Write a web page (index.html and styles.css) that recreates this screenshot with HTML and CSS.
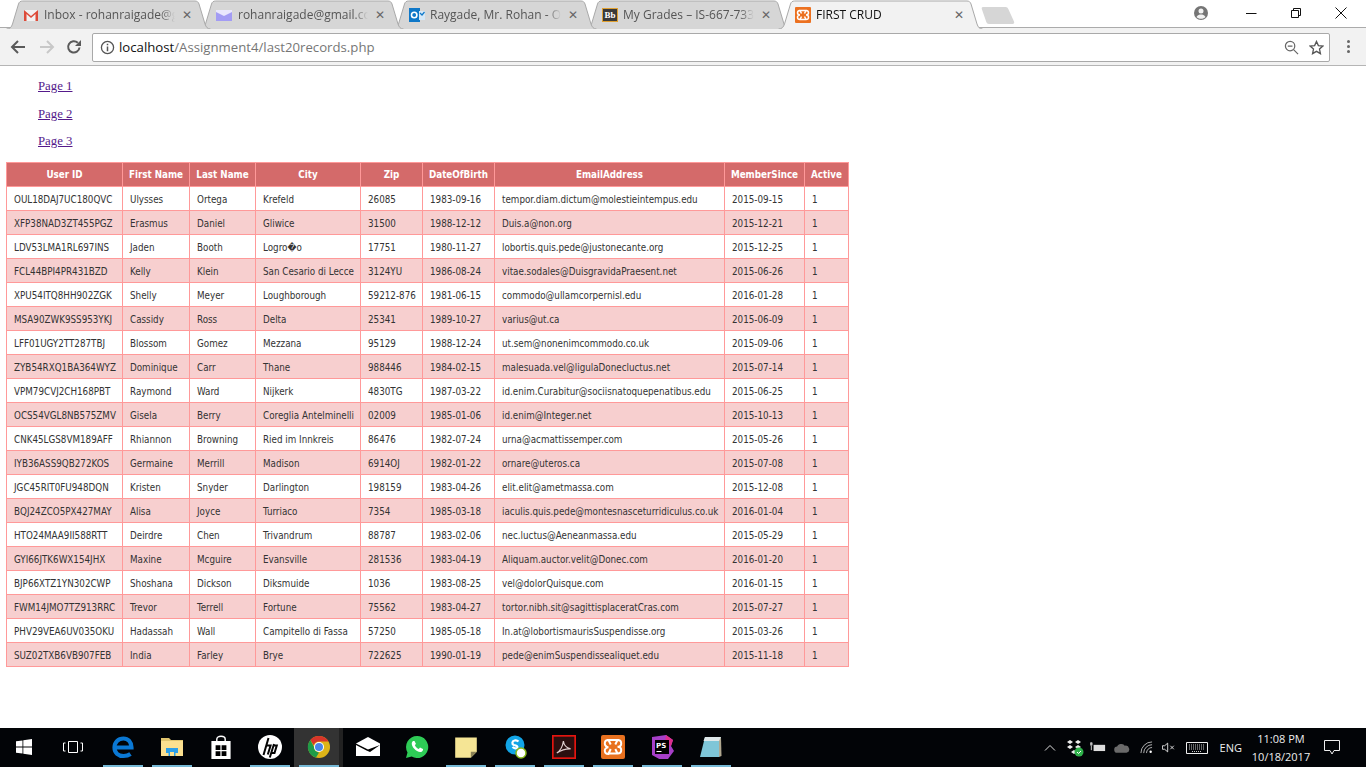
FILE: index.html
```html
<!DOCTYPE html>
<html lang="en">
<head>
<meta charset="utf-8">
<title>FIRST CRUD</title>
<link rel="stylesheet" href="styles.css">
</head>
<body>
<svg class="defs" width="0" height="0" aria-hidden="true">
  <symbol id="tabshape" viewBox="0 0 205 29" preserveAspectRatio="none">
    <path d="M0.5 29C4 29 5.500 27 6.500 24L12.500 4C13.100 2 14.500 1 16.500 1L189 1C191 1 192.400 2 193 4L199 24C200 27 201.500 29 204.500 29"/>
  </symbol>
</svg>
<div class="window">
  <header class="tabstrip">
    <div class="tab t1"><svg class="tabbg"><use href="#tabshape"/></svg>
      <svg class="fav" viewBox="0 0 16 16"><path d="M1 3h14v11H1z" fill="#f1f1f1"/><path d="M1 14V3l7 6 7-6v11h-2.500V7L8 11 3.500 7v7z" fill="#dd4b39"/></svg>
      <span class="tabtitle">Inbox - rohanraigade@gmail.com</span><span class="close">✕</span></div>
    <div class="tab t2"><svg class="tabbg"><use href="#tabshape"/></svg>
      <svg class="fav wide" viewBox="0 0 16 16"><path d="M0 3h16v11H0z" fill="#a39cf4"/><path d="M0 3h16v2L8 9 0 5z" fill="#e9e7fd"/></svg>
      <span class="tabtitle">rohanraigade@gmail.com</span><span class="close">✕</span></div>
    <div class="tab t3"><svg class="tabbg"><use href="#tabshape"/></svg>
      <svg class="fav" viewBox="0 0 16 16"><path d="M0 1h11v14H0z" fill="#0f78c8"/><path d="M10 4h6v9h-6z" fill="#d5e8f7"/><circle cx="5.200" cy="8" r="2.700" fill="none" stroke="#fff" stroke-width="1.600"/><path d="M11 6l2 2 2.500-3" fill="none" stroke="#0f78c8" stroke-width="1.200"/></svg>
      <span class="tabtitle">Raygade, Mr. Rohan - Outlook</span><span class="close">✕</span></div>
    <div class="tab t4"><svg class="tabbg"><use href="#tabshape"/></svg>
      <span class="bb">Bb</span>
      <span class="tabtitle">My Grades – IS-667-7330</span><span class="close">✕</span></div>
    <div class="tab t5 active"><svg class="tabbg"><use href="#tabshape"/></svg>
      <svg class="fav" viewBox="0 0 16 16"><rect width="16" height="16" rx="1" fill="#ec7120"/><path d="M5 3.500h6L9.500 6.500 11 3.500c2 0 2.500 1 2.500 2.300 0 1.200-1 2.200-2.500 2.200 1.500 0 2.500 1 2.500 2.200 0 1.300-.5 2.300-2.500 2.300L9.500 9.500 11 12.500H5l1.500-3L5 12.500c-2 0-2.500-1-2.500-2.300C2.500 9 3.500 8 5 8 3.500 8 2.500 7 2.500 5.800 2.500 4.500 3 3.500 5 3.500l1.500 3z" fill="none" stroke="#fff" stroke-width="1.500"/></svg>
      <span class="tabtitle">FIRST CRUD</span><span class="close">✕</span></div>
    <svg class="newtab" viewBox="0 0 34 17"><path d="M2 0H24.500C26 0 26.800.8 27.300 2L33 14.500C33.600 16 33 17 31.500 17H8C6.500 17 5.800 16 5.300 15L.8 2C.4.800 1 0 2 0z"/></svg>
    <div class="winctl">
      <svg class="avatar" viewBox="0 0 16 16"><circle cx="8" cy="8" r="7" fill="#757575"/><circle cx="8" cy="6" r="2.500" fill="#f2f2f2"/><path d="M3.500 12c1-2 3-2.500 4.500-2.500s3.500.5 4.500 2.500c-1 1-2.700 1.800-4.500 1.800S4.500 13 3.500 12z" fill="#f2f2f2"/></svg>
      <svg class="wc" viewBox="0 0 12 12"><path d="M1 6.500h10.500" stroke="#111" fill="none"/></svg>
      <svg class="wc" viewBox="0 0 12 12"><path d="M1.500 3.500h7v7h-7zM3.500 3.500v-2h7v7h-2" stroke="#111" fill="none"/></svg>
      <svg class="wc" viewBox="0 0 12 12"><path d="M.5.500l11 11M11.500.500l-11 11" stroke="#111" fill="none"/></svg>
    </div>
  </header>
  <nav class="toolbar">
    <svg class="nav" viewBox="0 0 16 16"><path d="M15 8H2M8 2L2 8l6 6" fill="none" stroke="#5a5a5a" stroke-width="2"/></svg>
    <svg class="nav" viewBox="0 0 16 16"><path d="M1 8h13M8 2l6 6-6 6" fill="none" stroke="#c8c8c8" stroke-width="2"/></svg>
    <svg class="nav reload" viewBox="0 0 16 16"><path d="M13.500 8.500A5.700 5.700 0 1 1 11.800 3.800" fill="none" stroke="#5a5a5a" stroke-width="2"/><path d="M15 1v6H9z" fill="#5a5a5a"/></svg>
    <div class="omnibox">
      <svg class="info" viewBox="0 0 16 16"><circle cx="8" cy="8" r="6.500" fill="none" stroke="#555" stroke-width="1.400"/><path d="M7.200 7h1.600v5H7.200zM7.200 4h1.600v1.700H7.200z" fill="#555"/></svg>
      <span class="url"><span class="host">localhost</span>/Assignment4/last20records.php</span>
      <svg class="omni-ic" viewBox="0 0 16 16"><circle cx="6.500" cy="6.500" r="5" fill="none" stroke="#666" stroke-width="1.300"/><path d="M4 6.500h5M10.200 10.200l4.800 4.800" stroke="#666" stroke-width="1.300" fill="none"/></svg>
      <svg class="omni-ic star" viewBox="0 0 16 16"><path d="M8 1.500l2 4.500 4.800.5-3.600 3.200 1 4.800L8 12.100l-4.200 2.400 1-4.800L1.200 6.500 6 6z" fill="none" stroke="#555" stroke-width="1.400"/></svg>
    </div>
    <div class="menu"><i></i><i></i><i></i></div>
  </nav>
  <main class="page">
    <p class="pagelink"><a href="#p1">Page 1</a></p>
    <p class="pagelink"><a href="#p2">Page 2</a></p>
    <p class="pagelink"><a href="#p3">Page 3</a></p>
    <table class="records">
      <colgroup><col class="c1"><col class="c2"><col class="c3"><col class="c4"><col class="c5"><col class="c6"><col class="c7"><col class="c8"><col class="c9"></colgroup>
      <thead><tr><th>User ID</th><th>First Name</th><th>Last Name</th><th>City</th><th>Zip</th><th>DateOfBirth</th><th>EmailAddress</th><th>MemberSince</th><th>Active</th></tr></thead>
      <tbody>
        <tr><td>OUL18DAJ7UC180QVC</td><td>Ulysses</td><td>Ortega</td><td>Krefeld</td><td>26085</td><td>1983-09-16</td><td>tempor.diam.dictum@molestieintempus.edu</td><td>2015-09-15</td><td>1</td></tr>
        <tr><td>XFP38NAD3ZT455PGZ</td><td>Erasmus</td><td>Daniel</td><td>Gliwice</td><td>31500</td><td>1988-12-12</td><td>Duis.a@non.org</td><td>2015-12-21</td><td>1</td></tr>
        <tr><td>LDV53LMA1RL697INS</td><td>Jaden</td><td>Booth</td><td>Logro�o</td><td>17751</td><td>1980-11-27</td><td>lobortis.quis.pede@justonecante.org</td><td>2015-12-25</td><td>1</td></tr>
        <tr><td>FCL44BPI4PR431BZD</td><td>Kelly</td><td>Klein</td><td>San Cesario di Lecce</td><td>3124YU</td><td>1986-08-24</td><td>vitae.sodales@DuisgravidaPraesent.net</td><td>2015-06-26</td><td>1</td></tr>
        <tr><td>XPU54ITQ8HH902ZGK</td><td>Shelly</td><td>Meyer</td><td>Loughborough</td><td>59212-876</td><td>1981-06-15</td><td>commodo@ullamcorpernisl.edu</td><td>2016-01-28</td><td>1</td></tr>
        <tr><td>MSA90ZWK9SS953YKJ</td><td>Cassidy</td><td>Ross</td><td>Delta</td><td>25341</td><td>1989-10-27</td><td>varius@ut.ca</td><td>2015-06-09</td><td>1</td></tr>
        <tr><td>LFF01UGY2TT287TBJ</td><td>Blossom</td><td>Gomez</td><td>Mezzana</td><td>95129</td><td>1988-12-24</td><td>ut.sem@nonenimcommodo.co.uk</td><td>2015-09-06</td><td>1</td></tr>
        <tr><td>ZYB54RXQ1BA364WYZ</td><td>Dominique</td><td>Carr</td><td>Thane</td><td>988446</td><td>1984-02-15</td><td>malesuada.vel@ligulaDonecluctus.net</td><td>2015-07-14</td><td>1</td></tr>
        <tr><td>VPM79CVJ2CH168PBT</td><td>Raymond</td><td>Ward</td><td>Nijkerk</td><td>4830TG</td><td>1987-03-22</td><td>id.enim.Curabitur@sociisnatoquepenatibus.edu</td><td>2015-06-25</td><td>1</td></tr>
        <tr><td>OCS54VGL8NB575ZMV</td><td>Gisela</td><td>Berry</td><td>Coreglia Antelminelli</td><td>02009</td><td>1985-01-06</td><td>id.enim@Integer.net</td><td>2015-10-13</td><td>1</td></tr>
        <tr><td>CNK45LGS8VM189AFF</td><td>Rhiannon</td><td>Browning</td><td>Ried im Innkreis</td><td>86476</td><td>1982-07-24</td><td>urna@acmattissemper.com</td><td>2015-05-26</td><td>1</td></tr>
        <tr><td>IYB36ASS9QB272KOS</td><td>Germaine</td><td>Merrill</td><td>Madison</td><td>6914OJ</td><td>1982-01-22</td><td>ornare@uteros.ca</td><td>2015-07-08</td><td>1</td></tr>
        <tr><td>JGC45RIT0FU948DQN</td><td>Kristen</td><td>Snyder</td><td>Darlington</td><td>198159</td><td>1983-04-26</td><td>elit.elit@ametmassa.com</td><td>2015-12-08</td><td>1</td></tr>
        <tr><td>BQJ24ZCO5PX427MAY</td><td>Alisa</td><td>Joyce</td><td>Turriaco</td><td>7354</td><td>1985-03-18</td><td>iaculis.quis.pede@montesnasceturridiculus.co.uk</td><td>2016-01-04</td><td>1</td></tr>
        <tr><td>HTO24MAA9II588RTT</td><td>Deirdre</td><td>Chen</td><td>Trivandrum</td><td>88787</td><td>1983-02-06</td><td>nec.luctus@Aeneanmassa.edu</td><td>2015-05-29</td><td>1</td></tr>
        <tr><td>GYI66JTK6WX154JHX</td><td>Maxine</td><td>Mcguire</td><td>Evansville</td><td>281536</td><td>1983-04-19</td><td>Aliquam.auctor.velit@Donec.com</td><td>2016-01-20</td><td>1</td></tr>
        <tr><td>BJP66XTZ1YN302CWP</td><td>Shoshana</td><td>Dickson</td><td>Diksmuide</td><td>1036</td><td>1983-08-25</td><td>vel@dolorQuisque.com</td><td>2016-01-15</td><td>1</td></tr>
        <tr><td>FWM14JMO7TZ913RRC</td><td>Trevor</td><td>Terrell</td><td>Fortune</td><td>75562</td><td>1983-04-27</td><td>tortor.nibh.sit@sagittisplaceratCras.com</td><td>2015-07-27</td><td>1</td></tr>
        <tr><td>PHV29VEA6UV035OKU</td><td>Hadassah</td><td>Wall</td><td>Campitello di Fassa</td><td>57250</td><td>1985-05-18</td><td>In.at@lobortismaurisSuspendisse.org</td><td>2015-03-26</td><td>1</td></tr>
        <tr><td>SUZ02TXB6VB907FEB</td><td>India</td><td>Farley</td><td>Brye</td><td>722625</td><td>1990-01-19</td><td>pede@enimSuspendissealiquet.edu</td><td>2015-11-18</td><td>1</td></tr>
      </tbody>
    </table>
  </main>
  <footer class="taskbar">
    <div class="tb-start"><svg viewBox="0 0 16 16"><path d="M0 2.300l6.500-.9v6.200H0zM7.300 1.300L16 0v7.600H7.300zM0 8.400h6.500v6.200L0 13.700zM7.300 8.400H16V16l-8.700-1.200z" fill="#fff"/></svg></div>
    <div class="tb-view"><svg viewBox="0 0 20 14"><path d="M5.500 1.500h9v11h-9zM2.500 3H.5v8h2M17.500 3h2v8h-2" fill="none" stroke="#fff"/></svg></div>
    <div class="tb-apps">
      <div class="app on"><svg viewBox="0 0 24 24"><path d="M4 12.500h16.500C20.500 7 17 3.500 12.500 3.500 7 3.500 3.500 7.500 3.500 12.500c0 5.500 4 8.500 9 8.500 2.800 0 5-.6 7-2" fill="none" stroke="#0a78d4" stroke-width="4.200"/></svg></div>
      <div class="app on double"><svg viewBox="0 0 24 24"><path d="M1 3h8l2 2h12v4H1z" fill="#e0c56e"/><path d="M1 6h22v15H1z" fill="#fbe08f"/><path d="M6 18v-5h12v5h-2.500v3h-7v-3z" fill="#2b9fe8"/><path d="M10 17h4v4h-4z" fill="#fbe08f"/></svg></div>
      <div class="app"><svg viewBox="0 0 20 20"><path d="M2 5h16v15H2z" fill="#fff"/><path d="M6.500 6V3.500C6.500 2 8 1 10 1s3.500 1 3.500 2.500V6" fill="none" stroke="#fff" stroke-width="1.200"/><path d="M5.500 8.500h4v4h-4zM10.500 8.500h4v4h-4zM5.500 13.500h4v4h-4zM10.500 13.500h4v4h-4z" fill="#000"/></svg></div>
      <div class="app on"><svg viewBox="0 0 24 24"><circle cx="12" cy="12" r="12" fill="#fff"/><path d="M10.500 3L5.500 20M9 10.500h3.600L9.800 19.500M16 9L11.800 22.500M15.500 10.500h3.300L16.500 18H13" fill="none" stroke="#050505" stroke-width="2"/></svg></div>
      <div class="app active on"><svg viewBox="0 0 24 24"><circle cx="12" cy="12" r="11" fill="#ddb418"/><path d="M12 1a11 11 0 0 1 9.500 5.500H12a5.500 5.500 0 0 0-5.200 3.700L3.300 5A11 11 0 0 1 12 1z" fill="#d8352a"/><path d="M3.300 5l4 7.500A5 5 0 0 0 12 17.500L9 22.600A11 11 0 0 1 3.300 5z" fill="#1f9b48"/><circle cx="12" cy="12" r="5" fill="#fff"/><circle cx="12" cy="12" r="4" fill="#4a86e8"/></svg></div>
      <div class="app"><svg viewBox="0 0 24 20"><path d="M0 6.500L12 0l12 6.500V19H0z" fill="#fff"/><path d="M0 6.500l12 6 12-4.500-10 7-3.500-1.500L0 8z" fill="#000"/></svg></div>
      <div class="app"><svg viewBox="0 0 24 24"><path d="M12 1a11 11 0 0 0-9.500 16.500L1 23l5.700-1.500A11 11 0 1 0 12 1z" fill="#2ecb56"/><path d="M8 6c-2 1.500-1.500 4.500 1 7.500s6 4.500 8 3c1-.8 1.200-2 1-2.500l-3-1.500-1.200 1.500c-1.500-.5-3.500-2.500-4-4L11 9 9.500 6z" fill="#fff"/></svg></div>
      <div class="app on"><svg viewBox="0 0 20 20"><path d="M1 2h18v12l-5 5H1z" fill="#f5e595"/><path d="M14 19v-5h5z" fill="#8b8256"/></svg></div>
      <div class="app on"><svg viewBox="0 0 20 24"><circle cx="10" cy="10" r="9.500" fill="#12a5e6"/><path d="M13.500 6.500C12.500 5.500 11 5 9.500 5.500 7 6 6.500 9 9 10c2 .7 4 1 3.300 2.500-.7 1.300-3.200 1-4.800-.5" fill="none" stroke="#fff" stroke-width="2.200"/><circle cx="16" cy="18" r="5" fill="#fff" stroke="#86b817" stroke-width="1.500"/></svg></div>
      <div class="app on"><svg viewBox="0 0 20 20"><rect x=".7" y=".7" width="18.600" height="18.600" fill="#2a0f0f" stroke="#e3150f" stroke-width="1.400"/><path d="M4 15c3-2 5-6 5.500-10 .3 3 2 5.500 6 6.500-4-.2-7 .5-11.500 3.500z" fill="none" stroke="#e0d0d0"/></svg></div>
      <div class="app on"><svg viewBox="0 0 24 24"><rect width="24" height="24" rx="2" fill="#e8711f"/><path d="M7.500 5h9l-2.200 4.500L16.500 5c3 0 3.700 1.500 3.700 3.400 0 1.800-1.500 3.300-3.700 3.300 2.200 0 3.700 1.500 3.700 3.300 0 2-.7 3.500-3.700 3.500l-2.200-4.500 2.200 4.500h-9l2.200-4.500L7.500 19c-3 0-3.700-1.500-3.700-3.500 0-1.800 1.500-3.300 3.700-3.300C5.300 12.200 3.800 10.200 3.800 8.400 3.800 6.500 4.500 5 7.500 5l2.200 4.500z" fill="none" stroke="#fff" stroke-width="2"/></svg></div>
      <div class="app on"><svg viewBox="0 0 24 24"><path d="M2 2l14-2 7 5-2 6 3 5-6 8-7 1-9-5z" fill="#a63fc8"/><path d="M16 0l7 5-2 6-6-3z" fill="#dd2f8c"/><rect x="5" y="5" width="14" height="14" fill="#000"/><text class="ps" x="6" y="13">PS</text><path d="M6.500 16.500h5" stroke="#fff"/></svg></div>
      <div class="app on"><svg viewBox="0 0 24 24"><path d="M6 2h16l-2 20H1z" fill="#7fc6d8"/><path d="M6 2h16l-1 4H4.500z" fill="#dfe8ea"/><path d="M20 6l2-4 .5 19-2.500 1z" fill="#b0a890"/></svg></div>
    </div>
    <div class="tray">
      <svg class="t-chev" viewBox="0 0 12 7"><path d="M1 6.500l5-5 5 5" fill="none" stroke="#ddd"/></svg>
      <svg class="t-box" viewBox="0 0 18 18"><path d="M4 1l3 2-3 2-3-2zM12 1l3 2-3 2-3-2zM4 6l3 2-3 2-3-2zM12 6l3 2-3 2-3-2zM8 11l3 2-3 2-3-2z" fill="#eee"/><circle cx="13" cy="13" r="4.500" fill="#2eb14a"/><path d="M11 13l1.500 1.500L15 12" stroke="#fff" fill="none"/></svg>
      <svg class="t-bat" viewBox="0 0 18 12"><path d="M4 3h13v7H4z" fill="#ddd"/><path d="M0 2h3M1 0v4M2 0v4M1.500 4v5" stroke="#ddd" fill="none"/></svg>
      <svg class="t-cloud" viewBox="0 0 18 12"><path d="M4 12a3.500 3.500 0 0 1-.5-7A5 5 0 0 1 12 4a4 4 0 0 1 2 8z" fill="#6a6a6a"/></svg>
      <svg class="t-wifi" viewBox="0 0 14 14"><path d="M1 13A12 12 0 0 1 13 1M4 13a9 9 0 0 1 9-9M7 13a6 6 0 0 1 6-6" fill="none" stroke="#bbb"/><circle cx="11.500" cy="11.500" r="1.300" fill="#fff"/></svg>
      <svg class="t-vol" viewBox="0 0 16 12"><path d="M.5 4h2.500L6.500 1v10L3 8H.5zM9.500 4l4 4M13.500 4l-4 4" fill="none" stroke="#eee"/></svg>
      <svg class="t-key" viewBox="0 0 22 12"><path d="M.5.500h21v11H.500z" fill="none" stroke="#eee"/><path d="M3 3h16M3 5h16M3 7h16M6 9.500h10" stroke="#ccc" stroke-dasharray="1 1" fill="none"/></svg>
      <span class="lang">ENG</span>
      <div class="clock"><span>11:08 PM</span><span>10/18/2017</span></div>
      <svg class="t-note" viewBox="0 0 16 15"><path d="M.5.500h15v10H10l-2 3.500-2-3.500H.5z" fill="none" stroke="#eee"/></svg>
    </div>
  </footer>
</div>
</body>
</html>
```

FILE: styles.css
```css
* { box-sizing: border-box; }
html, body { margin: 0; height: 100%; overflow: hidden; background: #fff; }
.defs { position: absolute; }
.window { height: 767px; display: flex; flex-direction: column; }

/* tab strip */
.tabstrip { height: 28px; flex: none; display: flex; padding-left: 6px; background: #fff; border-bottom: 1px solid #ababab; position: relative; }
.tab { position: relative; width: 205px; height: 29px; flex: none; margin-right: -12px; display: flex; align-items: center; padding: 0 0 0 17px; font: 12px "Open Sans", sans-serif; color: #555; }
.tab.t1 { z-index: 5; } .tab.t2 { z-index: 4; } .tab.t3 { z-index: 3; } .tab.t4 { z-index: 2; } .tab.t5 { z-index: 6; color: #111; }
.tabbg { position: absolute; left: 0; top: 0; width: 100%; height: 100%; fill: #d6d6d6; stroke: #a9a9a9; }
.active .tabbg { fill: #f2f2f2; }
.fav, .bb, .tabtitle, .close { position: relative; }
.fav { width: 16px; height: 16px; flex: none; }
.bb { width: 16px; height: 14px; flex: none; background: #3a3a3a; border: 1px solid #e0a030; color: #fff; font: bold 9px/12px "Liberation Serif", serif; text-align: center; }
.tabtitle { margin-left: 5px; flex: 1; min-width: 0; white-space: nowrap; overflow: hidden; -webkit-mask-image: linear-gradient(to left, transparent 0, #000 14px); mask-image: linear-gradient(to left, transparent 0, #000 14px); }
.t2 .tabtitle { margin-left: 6px; }
.close { width: 12px; margin: 0 18px 0 6px; font: 12px "DejaVu Sans", sans-serif; color: #666; flex: none; text-align: center; }
.newtab { position: relative; margin: 7px 0 0 10px; width: 34px; height: 17px; flex: none; fill: #d6d6d6; }
.winctl { margin-left: auto; height: 26px; display: flex; align-items: center; padding-right: 19px; }
.winctl svg { flex: none; }
.avatar { width: 16px; height: 16px; margin: 0 36px 0 0; }
.wc { width: 12px; height: 12px; margin-left: 33px; }
.winctl .avatar + .wc { margin-left: 0; }

/* toolbar */
.toolbar { height: 38px; flex: none; background: #f2f2f2; border-bottom: 1px solid #b5b5b5; display: flex; align-items: center; padding: 0 0 0 10px; }
.nav { width: 16px; height: 16px; flex: none; margin-right: 13px; }
.nav.reload { margin: 0 10px 0 -2px; }
.omnibox { width: 1238px; height: 29px; margin-top: 1px; background: #fff; border: 1px solid #a9a9a9; border-radius: 2px; display: flex; align-items: center; padding: 0 5px 0 7px; }
.info { width: 15px; height: 15px; flex: none; }
.url { margin-left: 4px; flex: 1; font: 13.200px "Open Sans", sans-serif; color: #767676; white-space: nowrap; }
.host { color: #111; }
.omni-ic { width: 15px; height: 15px; flex: none; }
.star { margin-left: 10px; }
.menu { margin-left: 17px; display: flex; flex-direction: column; gap: 2px; }
.menu i { width: 3px; height: 3px; border-radius: 50%; background: #666; }

/* page */
.page { flex: 1; min-height: 0; padding: 13px 0 0 6px; font-family: "Liberation Serif", serif; }
.pagelink { margin: 0 0 12.700px 32px; font-size: 12.800px; line-height: 15px; }
.pagelink a { color: #551a8b; }
.records { border-collapse: collapse; table-layout: fixed; width: 842px; margin-top: 13px; font: 9.750px "DejaVu Sans", Verdana, sans-serif; font-stretch: condensed; color: #333; }
.records col.c1 { width: 116px; } .records col.c2 { width: 67px; } .records col.c3 { width: 66px; } .records col.c4 { width: 105px; } .records col.c5 { width: 62px; } .records col.c6 { width: 72px; } .records col.c7 { width: 230px; } .records col.c8 { width: 80px; } .records col.c9 { width: 44px; }
.records th, .records td { border: 1px solid #f99; height: 24px; padding: 1px 0 0 7px; text-align: left; white-space: nowrap; overflow: hidden; }
.records th { background: #d46a6a; color: #fff; font-weight: bold; text-align: center; padding: 0; }
.records tbody tr:nth-child(even) { background: #f7cfcf; }

/* taskbar */
.taskbar { height: 39px; flex: none; background: #020407; display: flex; color: #eee; }
.tb-start { width: 48px; display: flex; align-items: center; justify-content: center; padding-bottom: 2px; }
.tb-start svg { width: 16px; height: 16px; }
.tb-view { width: 50px; display: flex; align-items: center; justify-content: center; padding-bottom: 2px; }
.tb-view svg { width: 20px; height: 14px; }
.tb-apps { display: flex; }
.app { width: 49px; padding-bottom: 2px; display: flex; align-items: center; justify-content: center; position: relative; }
.app svg { width: 24px; height: 24px; }
.app.on::after { content: ""; position: absolute; left: 5px; right: 4px; bottom: 0; height: 2px; background: #76b9d6; }
.app.active { background: #333; box-shadow: inset -4px 0 0 #222; }
.ps { font: bold 7px "DejaVu Sans", sans-serif; fill: #fff; }
.tray { margin-left: auto; display: flex; align-items: center; font: 11px "Open Sans", sans-serif; }
.tray svg { flex: none; }
.t-chev { width: 12px; height: 7px; margin-right: 10px; }
.t-box { width: 18px; height: 18px; margin-right: 6px; }
.t-bat { width: 16px; height: 11px; margin-right: 8px; }
.t-cloud { width: 16px; height: 11px; margin-right: 10px; }
.t-wifi { width: 13px; height: 13px; margin-right: 9px; }
.t-vol { width: 14px; height: 11px; margin-right: 10px; }
.t-key { width: 22px; height: 12px; margin-right: 12px; }
.lang { margin-right: 9px; }
.clock { display: flex; flex-direction: column; align-items: center; line-height: 18px; width: 60px; }
.t-note { width: 16px; height: 15px; margin: 0 26px 0 13px; }
```
